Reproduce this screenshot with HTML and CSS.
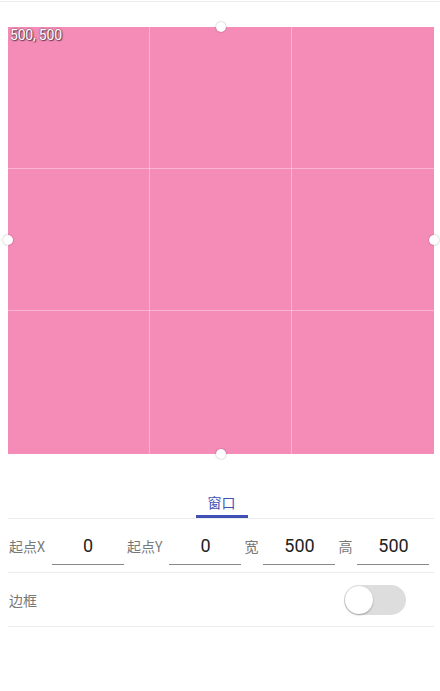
FILE: index.html
```html
<!DOCTYPE html>
<html lang="zh">
<head>
<meta charset="utf-8">
<link rel="stylesheet" href="styles.css">
</head>
<body>
<div class="topbar"></div>
<div class="page">
  <div class="stage">
    <div class="canvas">
      <div class="grid"></div>
      <span class="size">500, 500</span>
      <span class="handle h-top"></span>
      <span class="handle h-bottom"></span>
      <span class="handle h-left"></span>
      <span class="handle h-right"></span>
    </div>
  </div>
  <div class="tabs">
    <div class="tab active">窗口</div>
  </div>
  <div class="row fields">
    <label class="lbl lbl-xy first">起点X</label><div class="inp">0</div>
    <label class="lbl lbl-xy">起点Y</label><div class="inp">0</div>
    <label class="lbl lbl-one">宽</label><div class="inp">500</div>
    <label class="lbl lbl-one">高</label><div class="inp">500</div>
  </div>
  <div class="row border-row">
    <span class="lbl first">边框</span>
    <span class="switch"><span class="knob"></span></span>
  </div>
</div>
</body>
</html>
```
FILE: styles.css
```css
html, body {
  margin: 0;
  padding: 0;
  background: #fff;
  font-family: Roboto, "Noto Sans CJK SC", sans-serif;
}
.topbar {
  height: 1px;
  margin-top: 1px;
  background: #ececec;
}
.page {
  padding: 0 6px 0 8px;
}
.stage {
  padding-top: 25px;
}
.canvas {
  position: relative;
  width: 426px;
  height: 427px;
  background: #f48cb7;
}
.grid {
  width: 100%;
  height: 100%;
  background-image:
    linear-gradient(to right, transparent 141px, rgba(255,255,255,0.35) 141px, rgba(255,255,255,0.35) 142px, transparent 142px, transparent 283px, rgba(255,255,255,0.35) 283px, rgba(255,255,255,0.35) 284px, transparent 284px),
    linear-gradient(to bottom, transparent 141px, rgba(255,255,255,0.35) 141px, rgba(255,255,255,0.35) 142px, transparent 142px, transparent 283px, rgba(255,255,255,0.35) 283px, rgba(255,255,255,0.35) 284px, transparent 284px);
}
.size {
  position: absolute;
  left: 2px;
  top: 0;
  font-size: 14px;
  line-height: 17px;
  color: #fff;
  letter-spacing: -0.2px;
  text-shadow: 0 0 2px rgba(0,0,0,0.7), 1px 1px 1px rgba(0,0,0,0.5);
}
.handle {
  position: absolute;
  width: 10px;
  height: 10px;
  border-radius: 50%;
  background: #fff;
  box-shadow: 0 0 2px rgba(0,0,0,0.35);
}
.h-top { left: 208px; top: -5px; }
.h-bottom { left: 208px; bottom: -5px; }
.h-left { left: -5px; top: 208px; }
.h-right { right: -5px; top: 208px; }
.tabs {
  display: flex;
  justify-content: center;
  margin-top: 37px;
  border-bottom: 1px solid #ececec;
}
.tab {
  width: 52px;
  text-align: center;
  font-family: "Noto Sans CJK SC", sans-serif;
  font-size: 14px;
  line-height: 20px;
  color: #3f51b5;
  padding-top: 1px;
  padding-bottom: 3px;
  border-bottom: 3px solid #3f51b5;
  margin-left: 1px;
}
.row {
  display: flex;
  align-items: center;
  border-bottom: 1px solid #ececec;
}
.fields {
  height: 53px;
}
.lbl {
  font-family: "Noto Sans CJK SC", sans-serif;
  font-size: 14px;
  color: #777;
}
.lbl.first {
  padding-left: 1px;
}
.lbl-xy {
  padding-right: 3px;
}
.lbl-one {
  margin-right: 1px;
}
.inp {
  box-sizing: border-box;
  width: 72px;
  height: 34px;
  margin: 4px 3px 0 4px;
  border-bottom: 1px solid #888;
  text-align: center;
  font-family: Roboto, sans-serif;
  font-size: 18px;
  line-height: 30px;
  color: #222;
}
.border-row {
  height: 53px;
  justify-content: space-between;
}
.switch {
  position: relative;
  width: 62px;
  height: 30px;
  border-radius: 15px;
  background: #ddd;
  margin-right: 28px;
}
.knob {
  position: absolute;
  left: 1px;
  top: 1px;
  width: 28px;
  height: 28px;
  border-radius: 50%;
  background: #fff;
  box-shadow: 0 1px 2px rgba(0,0,0,0.3);
}
```
